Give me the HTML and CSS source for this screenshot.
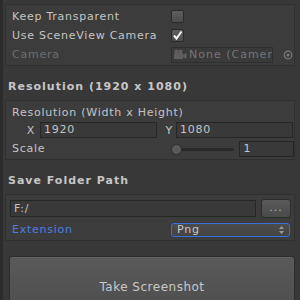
FILE: index.html
```html
<!DOCTYPE html>
<html lang="en">
<head>
    <meta charset="UTF-8">
    <title>Screenshot Tool</title>
    <link rel="stylesheet" href="styles.css">
</head>
<body>
    <div class="panel">
        <div class="box box-camera">
            <div class="row">
                <span class="label">Keep Transparent</span>
                <span class="checkbox"></span>
            </div>
            <div class="row">
                <span class="label">Use SceneView Camera</span>
                <span class="checkbox checked">
                    <svg width="13" height="13" viewBox="0 0 13 13"><path d="M3 6.5 L5.5 9.5 L10.5 2.5" fill="none" stroke="#f4f4f4" stroke-width="2"/></svg>
                </span>
            </div>
            <div class="row disabled">
                <span class="label">Camera</span>
                <span class="object-field">
                    <svg class="cam-icon" width="14" height="11" viewBox="0 0 14 11"><rect x="1" y="4" width="9" height="6" fill="#5e5e5e"/><circle cx="3.5" cy="2.5" r="2" fill="#5e5e5e"/><circle cx="7.5" cy="2.5" r="2" fill="#5e5e5e"/><path d="M10 6 L13.5 4 L13.5 10 L10 8Z" fill="#5e5e5e"/></svg>
                    <span class="object-name">None (Camera)</span>
                </span>
                <svg class="target" width="10" height="10" viewBox="0 0 10 10"><circle cx="5" cy="5" r="3.8" fill="none" stroke="#7a7a7a" stroke-width="1.2"/><circle cx="5" cy="5" r="1.5" fill="#7a7a7a"/></svg>
            </div>
        </div>

        <div class="heading">Resolution (1920 x 1080)</div>
        <div class="box box-resolution">
            <div class="row">
                <span class="label">Resolution (Width x Height)</span>
            </div>
            <div class="row xy-row">
                <span class="axis">X</span>
                <span class="field wide">1920</span>
                <span class="axis axis-y">Y</span>
                <span class="field wide">1080</span>
            </div>
            <div class="row">
                <span class="label">Scale</span>
                <span class="slider">
                    <span class="track"></span>
                    <span class="thumb"></span>
                </span>
                <span class="field scale-field">1</span>
            </div>
        </div>

        <div class="heading">Save Folder Path</div>
        <div class="box box-path">
            <div class="row path-row">
                <span class="field path-field">F:/</span>
                <span class="small-btn">...</span>
            </div>
            <div class="row">
                <span class="label focused">Extension</span>
                <span class="dropdown">
                    Png
                    <svg width="5" height="8" viewBox="0 0 5 8"><path d="M0 3 L2.5 0 L5 3Z M0 5 L2.5 8 L5 5Z" fill="#9a9a9a"/></svg>
                </span>
            </div>
        </div>

        <div class="big-btn">Take Screenshot</div>
    </div>
</body>
</html>
```

FILE: styles.css
```css
body {
    margin: 0;
    background: #383838;
    font-family: "DejaVu Sans", sans-serif;
    font-size: 11px;
    letter-spacing: 0.75px;
    color: #c4c4c4;
    width: 300px;
    height: 300px;
    overflow: hidden;
}

.panel {
    border-left: 3px solid #2b2b2b;
    height: 300px;
    padding: 4px 5px 0 2px;
    box-sizing: border-box;
    overflow: hidden;
}

.box {
    background: #3c3c3c;
    border: 1px solid #303030;
    padding: 2px 0 1px 6px;
}

.row {
    display: flex;
    align-items: center;
    height: 19px;
}

.label {
    width: 159px;
    flex-shrink: 0;
    white-space: nowrap;
}

.disabled .label {
    color: #6e6e6e;
}

.checkbox {
    width: 11px;
    height: 11px;
    border: 1px solid #2a2a2a;
    border-radius: 2px;
    background: linear-gradient(#5e5e5e, #4c4c4c);
    position: relative;
}

.checkbox svg {
    position: absolute;
    left: -1px;
    top: -1px;
}

.object-field {
    width: 102px;
    height: 16px;
    flex-shrink: 0;
    background: #3a3a3a;
    border: 1px solid #2e2e2e;
    color: #767676;
    display: flex;
    align-items: center;
    gap: 2px;
    padding-left: 1px;
    box-sizing: border-box;
    overflow: hidden;
    white-space: nowrap;
}

.cam-icon {
    flex-shrink: 0;
}

.object-name {
    flex-shrink: 0;
    letter-spacing: 1px;
}

.target {
    margin-left: 10px;
    flex-shrink: 0;
}

.heading {
    font-weight: bold;
    color: #c6c6c6;
    line-height: 14px;
    letter-spacing: 1px;
    padding: 14px 0 6px 3px;
}

.box-resolution .row:first-child {
    height: 18px;
}

.xy-row {
    height: 18px;
}

.axis {
    width: 28px;
    text-align: right;
    padding-right: 5px;
    box-sizing: border-box;
}

.axis-y {
    width: 19px;
    padding-right: 3px;
}

.field {
    height: 16px;
    background: #393939;
    border: 1px solid #262626;
    box-sizing: border-box;
    padding-left: 3px;
    line-height: 14px;
    white-space: nowrap;
}

.field.wide {
    width: 117px;
}

.slider {
    position: relative;
    width: 64px;
    height: 16px;
}

.track {
    position: absolute;
    left: 2px;
    right: 0;
    top: 7px;
    height: 3px;
    border-radius: 2px;
    background: #2a2a2a;
}

.thumb {
    position: absolute;
    left: 0;
    top: 3px;
    width: 9px;
    height: 9px;
    border-radius: 50%;
    background: #5a5a5a;
    border: 1px solid #2b2b2b;
}

.scale-field {
    width: 55px;
    margin-left: 5px;
}

.path-row {
    height: 23px;
    padding-right: 3px;
}

.path-field {
    width: 247px;
    height: 17px;
    line-height: 15px;
    margin-left: -2px;
}

.small-btn {
    margin-left: 5px;
    width: 30px;
    height: 19px;
    border-radius: 3px;
    background: linear-gradient(#5a5a5a, #4a4a4a);
    border: 1px solid #2c2c2c;
    box-sizing: border-box;
    text-align: center;
    line-height: 15px;
    color: #b8b8b8;
    letter-spacing: 1px;
}

.focused {
    color: #4e7ee4;
}

.dropdown {
    width: 119px;
    height: 14px;
    border: 1px solid #3c6de0;
    border-radius: 3px;
    background: linear-gradient(#4c4c4c, #444);
    box-sizing: border-box;
    display: flex;
    align-items: center;
    justify-content: space-between;
    padding: 0 5px;
    color: #c8c8c8;
}

.big-btn {
    margin: 15px 0 0 4px;
    height: 50px;
    border: 1px solid #2c2c2c;
    border-bottom: none;
    border-radius: 3px 3px 0 0;
    background: linear-gradient(#595959, #4f4f4f);
    box-shadow: inset 0 1px 0 #636363;
    text-align: center;
    padding-top: 23px;
    box-sizing: border-box;
    font-size: 12px;
    letter-spacing: 0.5px;
    color: #c8c8c8;
}
```
